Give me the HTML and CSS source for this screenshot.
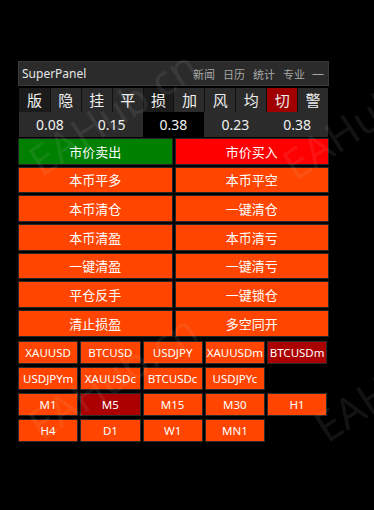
FILE: index.html
```html
<!DOCTYPE html>
<html lang="zh">
<head>
<meta charset="utf-8">
<title>SuperPanel</title>
<link rel="stylesheet" href="styles.css">
</head>
<body>
<div class="panel">
  <div class="titlebar">
    <span class="title">SuperPanel</span>
    <div class="menu">
      <span>新闻</span><span>日历</span><span>统计</span><span>专业</span><span class="min">—</span>
    </div>
  </div>
  <div class="tools">
    <div class="tool-row">
      <button class="tool dark">版</button>
      <button class="tool">隐</button>
      <button class="tool">挂</button>
      <button class="tool">平</button>
      <button class="tool dark">损</button>
      <button class="tool">加</button>
      <button class="tool">风</button>
      <button class="tool">均</button>
      <button class="tool red">切</button>
      <button class="tool">警</button>
    </div>
    <div class="value-row">
      <div class="value">0.08</div>
      <div class="value">0.15</div>
      <div class="value black">0.38</div>
      <div class="value">0.23</div>
      <div class="value">0.38</div>
    </div>
  </div>
  <div class="actions">
    <button class="act green">市价卖出</button>
    <button class="act red">市价买入</button>
    <button class="act">本币平多</button>
    <button class="act">本币平空</button>
    <button class="act">本币清仓</button>
    <button class="act">一键清仓</button>
    <button class="act">本币清盈</button>
    <button class="act">本币清亏</button>
    <button class="act">一键清盈</button>
    <button class="act">一键清亏</button>
    <button class="act">平仓反手</button>
    <button class="act">一键锁仓</button>
    <button class="act">清止损盈</button>
    <button class="act">多空同开</button>
  </div>
  <div class="symbols">
    <button class="sym">XAUUSD</button>
    <button class="sym">BTCUSD</button>
    <button class="sym">USDJPY</button>
    <button class="sym">XAUUSDm</button>
    <button class="sym sel">BTCUSDm</button>
    <button class="sym">USDJPYm</button>
    <button class="sym">XAUUSDc</button>
    <button class="sym">BTCUSDc</button>
    <button class="sym">USDJPYc</button>
    <span class="empty"></span>
    <button class="sym">M1</button>
    <button class="sym sel">M5</button>
    <button class="sym">M15</button>
    <button class="sym">M30</button>
    <button class="sym">H1</button>
    <button class="sym">H4</button>
    <button class="sym">D1</button>
    <button class="sym">W1</button>
    <button class="sym">MN1</button>
  </div>
</div>
<div class="watermarks" aria-hidden="true">
  <span class="wm wm1">EAHub.cn</span>
  <span class="wm wm2">EAHub.cn</span>
  <span class="wm wm3">EAHub.cn</span>
  <span class="wm wm4">EAHub.cn</span>
</div>
</body>
</html>
```

FILE: styles.css
```css
html, body {
  margin: 0;
  padding: 0;
  background: #000;
}
body {
  font-family: "Noto Sans", "Noto Sans CJK SC", sans-serif;
  color: #fff;
}
button {
  font: inherit;
  color: inherit;
  margin: 0;
  padding: 0;
  cursor: pointer;
}
.panel {
  width: 311px;
  margin: 61px 0 0 18px;
}
.titlebar {
  box-sizing: border-box;
  height: 25px;
  background: #2b2b2b;
  border: 1px solid #3a3a3a;
  display: flex;
  align-items: center;
  justify-content: space-between;
  padding: 0 4px 0 3px;
}
.title {
  font-size: 12px;
  color: #e6e6e6;
}
.menu {
  display: flex;
  align-items: center;
  gap: 8px;
  font-family: "Noto Sans CJK SC", sans-serif;
  font-size: 11px;
  color: #a8a8a8;
}
.menu .min {
  font-family: "Noto Sans", sans-serif;
  font-size: 12px;
  margin-left: -1px;
}
.tools {
  margin: 2px 1px 0 1px;
}
.tool-row {
  display: grid;
  grid-template-columns: repeat(10, 1fr);
  height: 24px;
}
.tool {
  box-sizing: border-box;
  height: 24px;
  border: none;
  border-left: 1px solid #111;
  background: #2b2b2b;
  font-family: "Noto Sans CJK SC", sans-serif;
  font-size: 15px;
  line-height: 24px;
  color: #f0f0f0;
}
.tool:first-child { border-left: none; }
.tool.dark { background: #1b1b1b; }
.tool.red { background: #a00000; }
.value-row {
  display: grid;
  grid-template-columns: repeat(5, 1fr);
  height: 25px;
  background: #2b2b2b;
}
.value {
  font-size: 14px;
  line-height: 26px;
  text-align: center;
  color: #f2f2f2;
}
.value.black { background: #000; }
.actions {
  display: grid;
  grid-template-columns: 1fr 1fr;
  grid-auto-rows: 26.67px;
  gap: 2px 2px;
  margin-top: 1px;
}
.act {
  box-sizing: border-box;
  border: 1px solid #262626;
  background: #ff4500;
  font-family: "Noto Sans CJK SC", sans-serif;
  font-size: 13px;
  color: #fff;
}
.act.green { background: #008000; }
.act.red { background: #ff0000; }
.symbols {
  display: grid;
  grid-template-columns: repeat(5, 60.25px);
  grid-auto-rows: 23.5px;
  gap: 2.5px 2px;
  margin-top: 4px;
}
.sym {
  box-sizing: border-box;
  border: 1px solid #2a2a2a;
  background: #ff4500;
  font-size: 11.5px;
  color: #fff;
  white-space: nowrap;
}
.sym.sel { background: #aa0000; }

.watermarks {
  position: fixed;
  inset: 0;
  overflow: hidden;
  pointer-events: none;
}
.wm {
  position: absolute;
  font-family: "Noto Sans", sans-serif;
  font-size: 42px;
  line-height: 1;
  color: rgba(210, 210, 210, 0.09);
  transform-origin: 0 100%;
  transform: rotate(-33deg);
  white-space: nowrap;
}
.wm1 { left: 44px; top: 140px; }
.wm2 { left: 44px; top: 404px; }
.wm3 { left: 298px; top: 144px; }
.wm4 { left: 330px; top: 406px; }
```
